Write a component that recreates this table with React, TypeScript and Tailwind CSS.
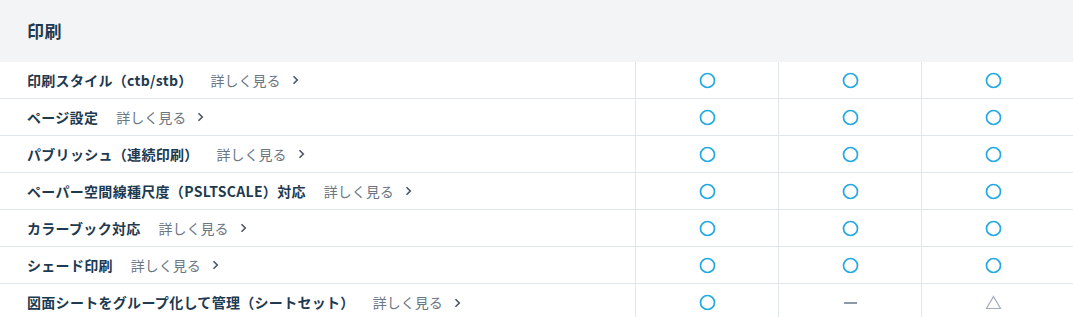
import React from 'react';

type Mark = 'o' | '-' | 'tri';

const rows: { label: string; marks: Mark[] }[] = [
  { label: '印刷スタイル（ctb/stb）', marks: ['o', 'o', 'o'] },
  { label: 'ページ設定', marks: ['o', 'o', 'o'] },
  { label: 'パブリッシュ（連続印刷）', marks: ['o', 'o', 'o'] },
  { label: 'ペーパー空間線種尺度（PSLTSCALE）対応', marks: ['o', 'o', 'o'] },
  { label: 'カラーブック対応', marks: ['o', 'o', 'o'] },
  { label: 'シェード印刷', marks: ['o', 'o', 'o'] },
  { label: '図面シートをグループ化して管理（シートセット）', marks: ['o', '-', 'tri'] },
];

function Symbol({ mark }: { mark: Mark }) {
  if (mark === 'o') {
    return (
      <svg width="17" height="17" viewBox="0 0 17 17">
        <circle cx="8.5" cy="8.5" r="7" fill="none" stroke="#25a9e2" strokeWidth="1.7" />
      </svg>
    );
  }
  if (mark === '-') {
    return <div className="h-[2px] w-[13px] bg-[#8e99a8]" />;
  }
  return (
    <svg width="17" height="15" viewBox="0 0 17 15">
      <path d="M8.5 1.5 L15.5 13.5 L1.5 13.5 Z" fill="none" stroke="#a3acb9" strokeWidth="1.2" strokeLinejoin="miter" />
    </svg>
  );
}

export default function App() {
  return (
    <div
      className="w-[1073px] bg-white text-[#1e3a50]"
      style={{ fontFamily: '"Noto Sans CJK JP", "Noto Sans", sans-serif' }}
    >
      {/* Section header */}
      <div className="flex h-[62px] items-center bg-[#f3f4f6] pl-[27px]">
        <h2 className="text-[17px] font-bold tracking-[0.5px]">印刷</h2>
      </div>

      {/* Rows */}
      {rows.map((row) => (
        <div
          key={row.label}
          className="grid h-[37px] grid-cols-[636px_143px_143px_143px] border-b border-[#e1e6ea] last:border-b-0"
        >
          <div className="flex items-center border-r border-[#e1e6ea] pl-[27px]">
            <span className="text-[14px] font-bold tracking-[0.3px]">{row.label}</span>
            <a className="ml-[18px] flex items-center gap-[11px] text-[14px] text-[#6b7683]">
              詳しく見る
              <svg width="7" height="10" viewBox="0 0 7 10">
                <path d="M1.5 1.2 L5.3 5 L1.5 8.8" fill="none" stroke="#4a5664" strokeWidth="1.6" />
              </svg>
            </a>
          </div>
          {row.marks.map((m, i) => (
            <div
              key={i}
              className={`flex items-center justify-center ${i < 2 ? 'border-r border-[#e1e6ea]' : ''}`}
            >
              <Symbol mark={m} />
            </div>
          ))}
        </div>
      ))}
    </div>
  );
}
